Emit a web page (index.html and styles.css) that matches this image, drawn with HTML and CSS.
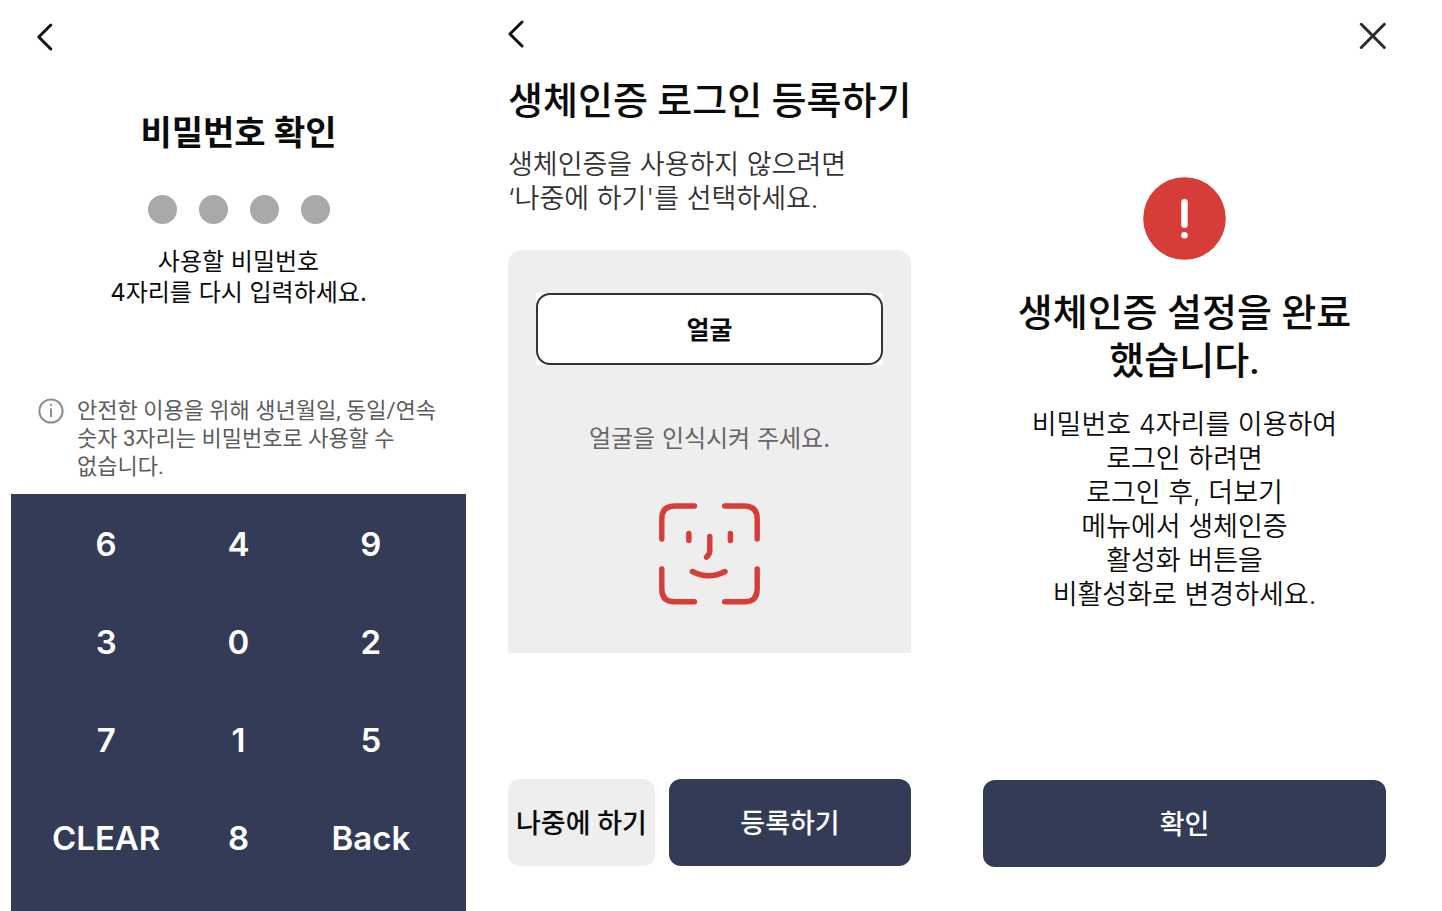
FILE: index.html
```html
<!DOCTYPE html>
<html lang="ko">
<head>
<meta charset="utf-8">
<meta name="viewport" content="width=device-width, initial-scale=1">
<title>생체인증 로그인</title>
<link rel="stylesheet" href="styles.css">
</head>
<body>
<main class="board">
  <section class="screen screen-pin">
    <header class="bar bar-pin">
      <button class="icon-button" type="button" aria-label="뒤로">
        <svg class="chevron" viewBox="0 0 18 30" aria-hidden="true"><path d="M14.800 3 L2.800 15 L14.800 27"/></svg>
      </button>
    </header>
    <h1 class="title title-pin">비밀번호 확인</h1>
    <div class="dots" role="img" aria-label="비밀번호 4자리">
      <span class="dot"></span><span class="dot"></span><span class="dot"></span><span class="dot"></span>
    </div>
    <p class="pin-help">사용할 비밀번호<br>4자리를 다시 입력하세요.</p>
    <div class="notice">
      <svg class="info" viewBox="0 0 26 26" aria-hidden="true">
        <circle cx="13" cy="13" r="11.600"/>
        <path d="M13 10.500 V19"/><circle class="info-dot" cx="13" cy="7.200" r="1.100"/>
      </svg>
      <p class="notice-text">안전한 이용을 위해 생년월일, 동일/연속<br>숫자 3자리는 비밀번호로 사용할 수<br>없습니다.</p>
    </div>
    <div class="keypad">
      <button class="key" type="button">6</button>
      <button class="key" type="button">4</button>
      <button class="key" type="button">9</button>
      <button class="key" type="button">3</button>
      <button class="key" type="button">0</button>
      <button class="key" type="button">2</button>
      <button class="key" type="button">7</button>
      <button class="key" type="button">1</button>
      <button class="key" type="button">5</button>
      <button class="key" type="button">CLEAR</button>
      <button class="key" type="button">8</button>
      <button class="key" type="button">Back</button>
    </div>
  </section>

  <section class="screen screen-register">
    <header class="bar">
      <button class="icon-button" type="button" aria-label="뒤로">
        <svg class="chevron" viewBox="0 0 18 30" aria-hidden="true"><path d="M14 3 L2 15 L14 27"/></svg>
      </button>
    </header>
    <h1 class="title title-register">생체인증 로그인 등록하기</h1>
    <p class="body-text lead">생체인증을 사용하지 않으려면<br>‘나중에 하기'를 선택하세요.</p>
    <div class="card">
      <div class="choice"><button class="choice-button" type="button">얼굴</button></div>
      <p class="card-text">얼굴을 인식시켜 주세요.</p>
      <svg class="face" viewBox="0 0 102 102" aria-hidden="true">
        <path d="M2.800 36 V16 Q2.800 3 15.500 3 H35.500"/>
        <path d="M65.700 3 H85.500 Q98.200 3 98.200 16 V36"/>
        <path d="M2.800 66 V86 Q2.800 98.800 15.500 98.800 H35.500"/>
        <path d="M65.700 98.800 H85.500 Q98.200 98.800 98.200 86 V66"/>
        <path d="M29.900 30.500 V37.500 M71.400 30.500 V37.500"/>
        <path d="M50.800 33.500 V47.500 Q50.800 51.500 47.500 54.200"/>
        <path d="M33.300 68.500 Q50 77 66 68.500"/>
      </svg>
    </div>
    <div class="actions">
      <button class="action action-later" type="button">나중에 하기</button>
      <button class="action action-main" type="button">등록하기</button>
    </div>
  </section>

  <section class="screen screen-done">
    <header class="bar bar-done">
      <button class="icon-button" type="button" aria-label="닫기">
        <svg class="close" viewBox="0 0 28 28" aria-hidden="true"><path d="M3.300 2.300 L26.300 25.500 M26.300 2.300 L3.300 25.500"/></svg>
      </button>
    </header>
    <svg class="alert" viewBox="0 0 83 83" aria-hidden="true">
      <circle class="alert-disc" cx="41.500" cy="41.500" r="41.300"/>
      <rect class="alert-mark" x="38.300" y="22" width="6.400" height="29" rx="3.200"/>
      <circle class="alert-mark" cx="41.500" cy="58.300" r="3.300"/>
    </svg>
    <h1 class="title title-done">생체인증 설정을 완료<br>했습니다.</h1>
    <p class="body-text done-text">비밀번호 4자리를 이용하여<br>로그인 하려면<br>로그인 후, 더보기<br>메뉴에서 생체인증<br>활성화 버튼을<br>비활성화로 변경하세요.</p>
    <div class="actions">
      <button class="action action-main" type="button">확인</button>
    </div>
  </section>
</main>
</body>
</html>
```
FILE: styles.css
```css
* {
  box-sizing: border-box;
}

body,
h1,
p {
  margin: 0;
}

body {
  background: #fff;
  color: #0b0b0b;
  font-family: Inter, "Noto Sans CJK KR", sans-serif;
}

button {
  border: 0;
  padding: 0;
  color: inherit;
  background: none;
  font-family: inherit;
  white-space: nowrap;
  cursor: pointer;
}

svg {
  display: block;
  flex: none;
}

.board {
  display: grid;
  grid-template-columns: 466fr 481fr 495fr;
  min-height: 100vh;
}

.screen {
  display: flex;
  flex-direction: column;
  min-width: 0;
}

.screen-pin {
  padding-left: 11px;
}

.screen-register {
  padding: 19px 36px 45px 42px;
}

.screen-done {
  padding: 22px 56px 44px 36px;
}

.bar {
  display: flex;
}

.bar-pin {
  padding: 22px 25px 0;
}

.bar-done {
  justify-content: flex-end;
}

.chevron {
  width: 18px;
  height: 30px;
  fill: none;
  stroke: #111;
  stroke-width: 3;
  stroke-linecap: round;
  stroke-linejoin: round;
}

.close {
  width: 28px;
  height: 28px;
  fill: none;
  stroke: #2b2b2b;
  stroke-width: 3;
  stroke-linecap: round;
}

.title,
.notice-text,
.action {
  font-family: Roboto, "Noto Sans CJK KR", sans-serif;
}

.title {
  font-size: 38px;
  font-weight: 500;
  line-height: 48px;
}

.title-pin {
  margin-top: 57px;
  font-size: 34px;
  font-weight: 700;
  text-align: center;
}

.title-register {
  margin-top: 28px;
  white-space: nowrap;
}

.title-done {
  margin-top: 29px;
  text-align: center;
}

.dots {
  display: flex;
  justify-content: center;
  gap: 22px;
  margin-top: 38px;
}

.dot {
  width: 29px;
  height: 29px;
  border-radius: 50%;
  background: #a9a9a9;
}

.pin-help {
  margin-top: 22px;
  font-size: 25px;
  font-weight: 350;
  line-height: 31px;
  text-align: center;
}

.notice {
  display: flex;
  gap: 13px;
  margin: 89px 0 13px;
  padding-left: 27px;
}

.info {
  width: 26px;
  height: 28px;
  fill: none;
  stroke: #8e8e8e;
  stroke-width: 2;
}

.info-dot {
  fill: #8e8e8e;
  stroke: none;
}

.notice-text {
  color: #5c5c5c;
  font-size: 22px;
  line-height: 28px;
}

.keypad {
  display: grid;
  flex: 1;
  grid-template-columns: repeat(3, 1fr);
  grid-auto-rows: 98px;
  padding: 1px 29px 23px;
  background: #343b57;
}

.key {
  color: #fff;
  font-size: 33px;
  font-weight: 600;
}

.body-text {
  font-size: 27px;
  font-weight: 350;
  line-height: 34px;
}

.lead {
  margin-top: 23px;
  color: #333;
}

.card {
  display: flex;
  flex-direction: column;
  align-items: center;
  margin-top: 34px;
  padding: 43px 28px 48px;
  border-radius: 14px 14px 0 0;
  background: #eee;
}

.choice {
  align-self: stretch;
  background: #fff;
}

.choice-button {
  width: 100%;
  height: 72px;
  padding-bottom: 2px;
  border: 2px solid #333;
  border-radius: 14px;
  background: #fff;
  font-size: 25px;
  font-weight: 700;
}

.card-text {
  margin: 58px 0 48px;
  color: #666;
  font-size: 24px;
  line-height: 32px;
}

.pin-help {
  font-size: 24px;
  font-weight: 400;
}

.face {
  width: 102px;
  height: 102px;
  fill: none;
  stroke: #d63c38;
  stroke-width: 5.400;
  stroke-linecap: round;
}

.alert {
  align-self: center;
  width: 83px;
  height: 83px;
  margin-top: 127px;
}

.alert-disc {
  fill: #d63c38;
}

.alert-mark {
  fill: #fff;
}

.done-text {
  margin-top: 23px;
  text-align: center;
}

.actions {
  display: flex;
  gap: 14px;
  margin-top: auto;
}

.action {
  height: 87px;
  padding-bottom: 2px;
  border-radius: 12px;
  font-size: 27px;
  font-weight: 500;
}

.action-later {
  flex: 147 1 0;
  background: #eee;
}

.action-main {
  flex: 242 1 0;
  color: #fff;
  background: #343b57;
}
```
